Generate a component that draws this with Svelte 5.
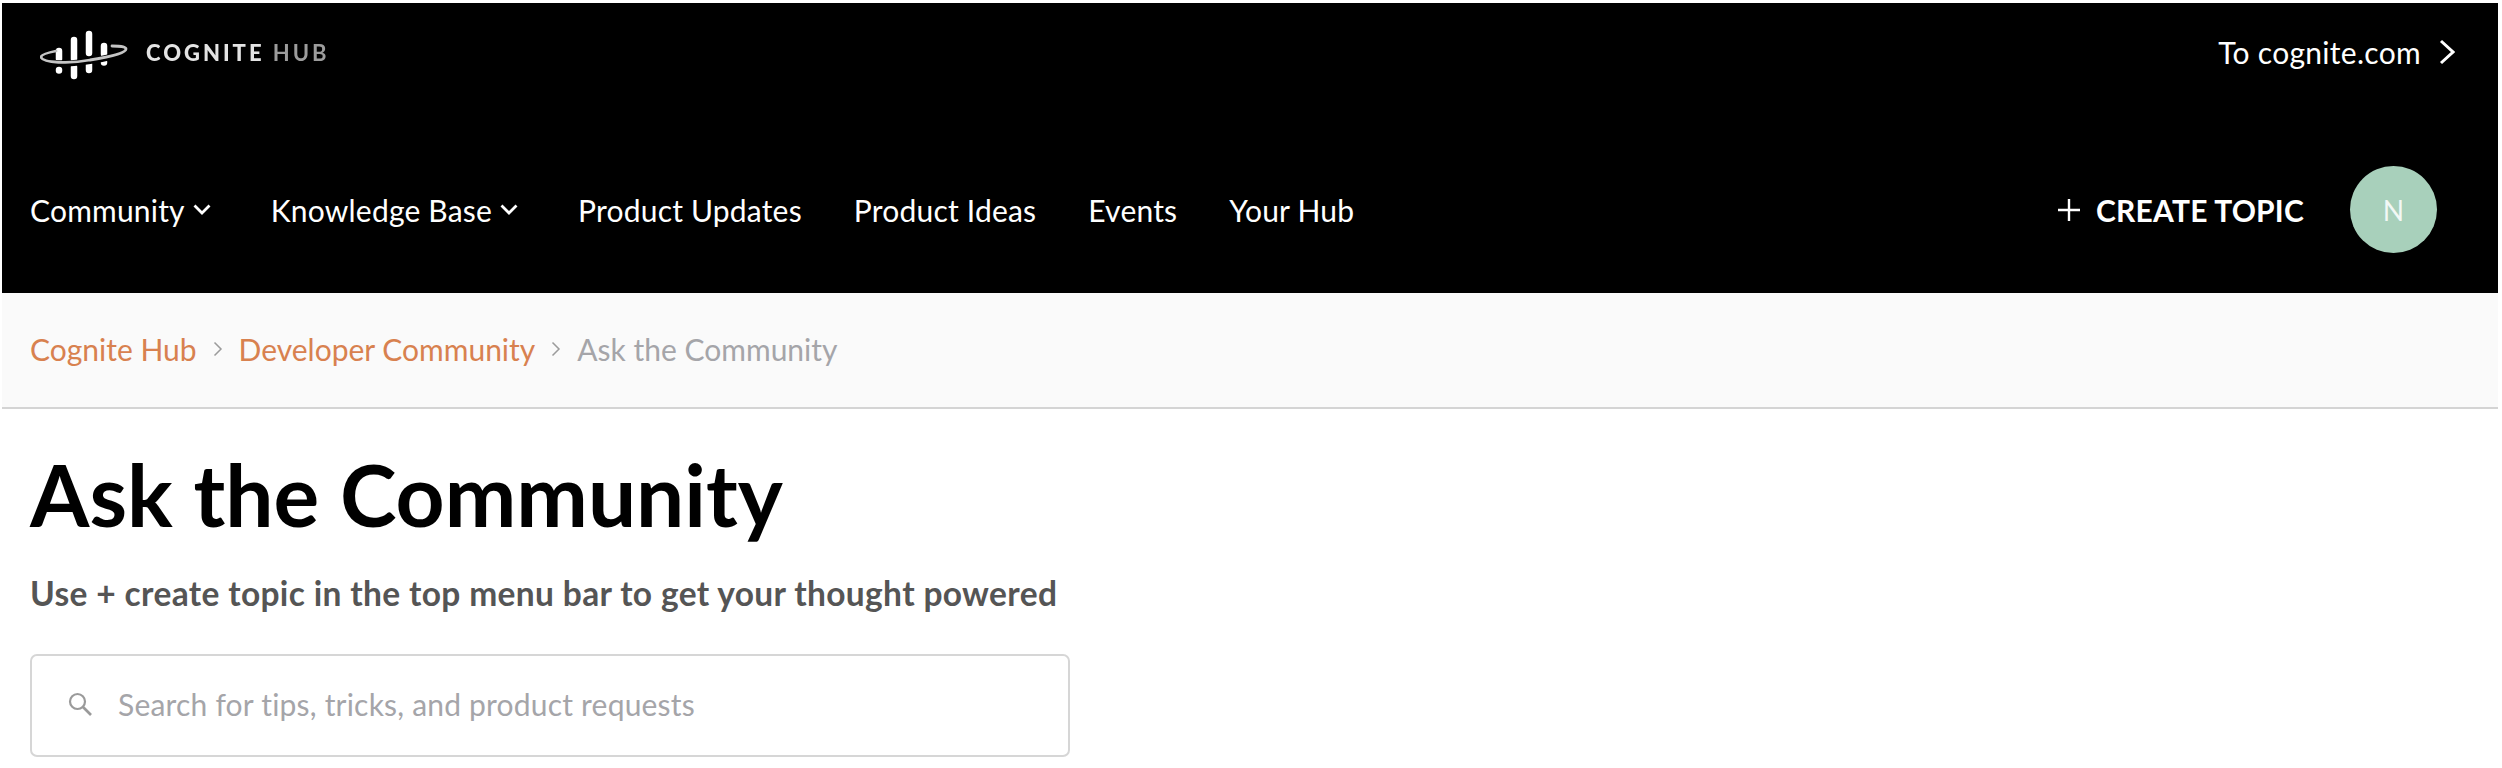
<script>
  const navItems = [
    { label: 'Community', caret: true },
    { label: 'Knowledge Base', caret: true },
    { label: 'Product Updates' },
    { label: 'Product Ideas' },
    { label: 'Events' },
    { label: 'Your Hub' }
  ];
</script>

<div class="page">
  <header class="header">
    <div class="top">
      <a class="logo" href="#top">
        <svg class="mark" viewBox="0 0 90 50" width="90" height="50" aria-hidden="true">
          <g fill="none" stroke="#fff" stroke-linecap="round">
            <path stroke-width="6.500" d="M19 21v8M34 10v19M49 4v19M64 16v8" />
            <path stroke-width="6.500" d="M19 40v.5M34 37v9M49 34v6M64 32v.5" />
            <path stroke-width="6" stroke="#000" stroke-linecap="butt" d="M8 31C20 35 38 33 50 31 65 29 76 26 84 22" />
            <path stroke-width="2.800" stroke="#c4c4c4" d="M16 21C6 23 1 25 1 27c1 6 29 7 49 3 20-3 36-7 36-11 0-2-6-3-14-3" />
          </g>
        </svg>
        <span class="wordmark">COGNITE <em>HUB</em></span>
      </a>
      <a class="site-link" href="#top">
        To cognite.com
        <svg viewBox="0 0 16 26" width="16" height="26" aria-hidden="true"><path d="M2 2l12 11L2 24" fill="none" stroke="#fff" stroke-width="3" /></svg>
      </a>
    </div>
    <div class="bottom">
      <nav class="nav">
        {#each navItems as item}
          <a class="nav-item" class:has-caret={item.caret} href="#top">
            {item.label}
            {#if item.caret}
              <svg viewBox="0 0 20 13" width="20" height="13" aria-hidden="true"><path d="M2.500 2.500l7.500 7.500 7.500-7.500" fill="none" stroke="#fff" stroke-width="2.800" /></svg>
            {/if}
          </a>
        {/each}
      </nav>
      <div class="actions">
        <a class="create" href="#top">
          <svg viewBox="0 0 22 22" width="22" height="22" aria-hidden="true"><path d="M11 0v22M0 11h22" stroke="#fff" stroke-width="2.400" /></svg>
          CREATE TOPIC
        </a>
        <div class="avatar">N</div>
      </div>
    </div>
  </header>

  <div class="crumbs">
    <a href="#top">Cognite Hub</a>
    <svg viewBox="0 0 10 16" width="10" height="16" aria-hidden="true"><path d="M1.500 1.500L8 8l-6.500 6.500" fill="none" stroke="#9b9b9b" stroke-width="1.500" /></svg>
    <a href="#top">Developer Community</a>
    <svg viewBox="0 0 10 16" width="10" height="16" aria-hidden="true"><path d="M1.500 1.500L8 8l-6.500 6.500" fill="none" stroke="#9b9b9b" stroke-width="1.500" /></svg>
    <span>Ask the Community</span>
  </div>

  <main class="main">
    <h1>Ask the Community</h1>
    <p class="sub">Use + create topic in the top menu bar to get your thought powered</p>
    <div class="search">
      <svg viewBox="0 0 24 24" width="24" height="24" aria-hidden="true"><circle cx="9.500" cy="9.500" r="7.500" fill="none" stroke="#9a9a9a" stroke-width="2.200" /><path d="M15 15l8 8" stroke="#9a9a9a" stroke-width="2.600" /></svg>
      <span>Search for tips, tricks, and product requests</span>
    </div>
  </main>
</div>

<style>
  :global(body) { margin: 0; background: #fff; }
  .page {
    padding: 3px 4px 0 2px;
    font-family: Lato, "Open Sans", sans-serif;
    height: 765px;
    overflow: hidden;
  }
  a { color: inherit; text-decoration: none; }
  .header {
    height: 290px;
    background: #000;
    color: #fff;
    display: flex;
    flex-direction: column;
  }
  .top {
    height: 98px;
    display: flex;
    align-items: center;
    justify-content: space-between;
    padding: 0 43px 0 38px;
  }
  .logo { display: flex; align-items: center; gap: 16px; }
  .mark { display: block; margin-top: 6px; filter: blur(.7px); }
  .wordmark {
    font-size: 22px;
    font-weight: 900;
    letter-spacing: 3px;
    color: #e4e4e4;
    filter: blur(.5px);
  }
  .wordmark em { font-style: normal; font-weight: 700; color: #9c9c9c; }
  .site-link { display: flex; align-items: center; gap: 18px; font-size: 30px; letter-spacing: .3px; }
  .bottom {
    flex: 1;
    display: flex;
    align-items: center;
    justify-content: space-between;
    padding: 25px 61px 0 28px;
  }
  .nav { display: flex; gap: 52px; }
  .nav-item { display: flex; align-items: center; gap: 7px; font-size: 30px; letter-spacing: .2px; }
  .has-caret { margin-right: 7px; }
  .actions { display: flex; align-items: center; gap: 46px; }
  .create { display: flex; align-items: center; gap: 16px; font-size: 30px; font-weight: 700; letter-spacing: .2px; }
  .avatar {
    width: 87px;
    height: 87px;
    border-radius: 50%;
    background: #a8d0bb;
    color: #f2f8f5;
    display: flex;
    align-items: center;
    justify-content: center;
    font-size: 28px;
  }
  .crumbs {
    height: 116px;
    box-sizing: border-box;
    background: #fafafa;
    border-bottom: 2px solid #d4d4d4;
    padding: 0 0 2px 28px;
    display: flex;
    align-items: center;
    gap: 16px;
    font-size: 30px;
    color: #a5a5a9;
  }
  .crumbs a { color: #d8814f; }
  .main { padding: 0 0 0 28px; }
  h1 {
    margin: 37px 0 0;
    font-size: 85.500px;
    line-height: 96px;
    font-weight: 700;
    color: #000;
  }
  .sub {
    margin: 31px 0 0;
    font-size: 33.500px;
    line-height: 40px;
    font-weight: 700;
    letter-spacing: .35px;
    color: #555;
  }
  .search {
    margin-top: 41px;
    width: 1040px;
    height: 103px;
    box-sizing: border-box;
    border: 2px solid #d6d6d6;
    border-radius: 7px;
    display: flex;
    align-items: center;
    gap: 26px;
    padding: 0 0 3px 36px;
    font-size: 30px;
    letter-spacing: .2px;
    color: #a5a5a9;
  }
</style>
